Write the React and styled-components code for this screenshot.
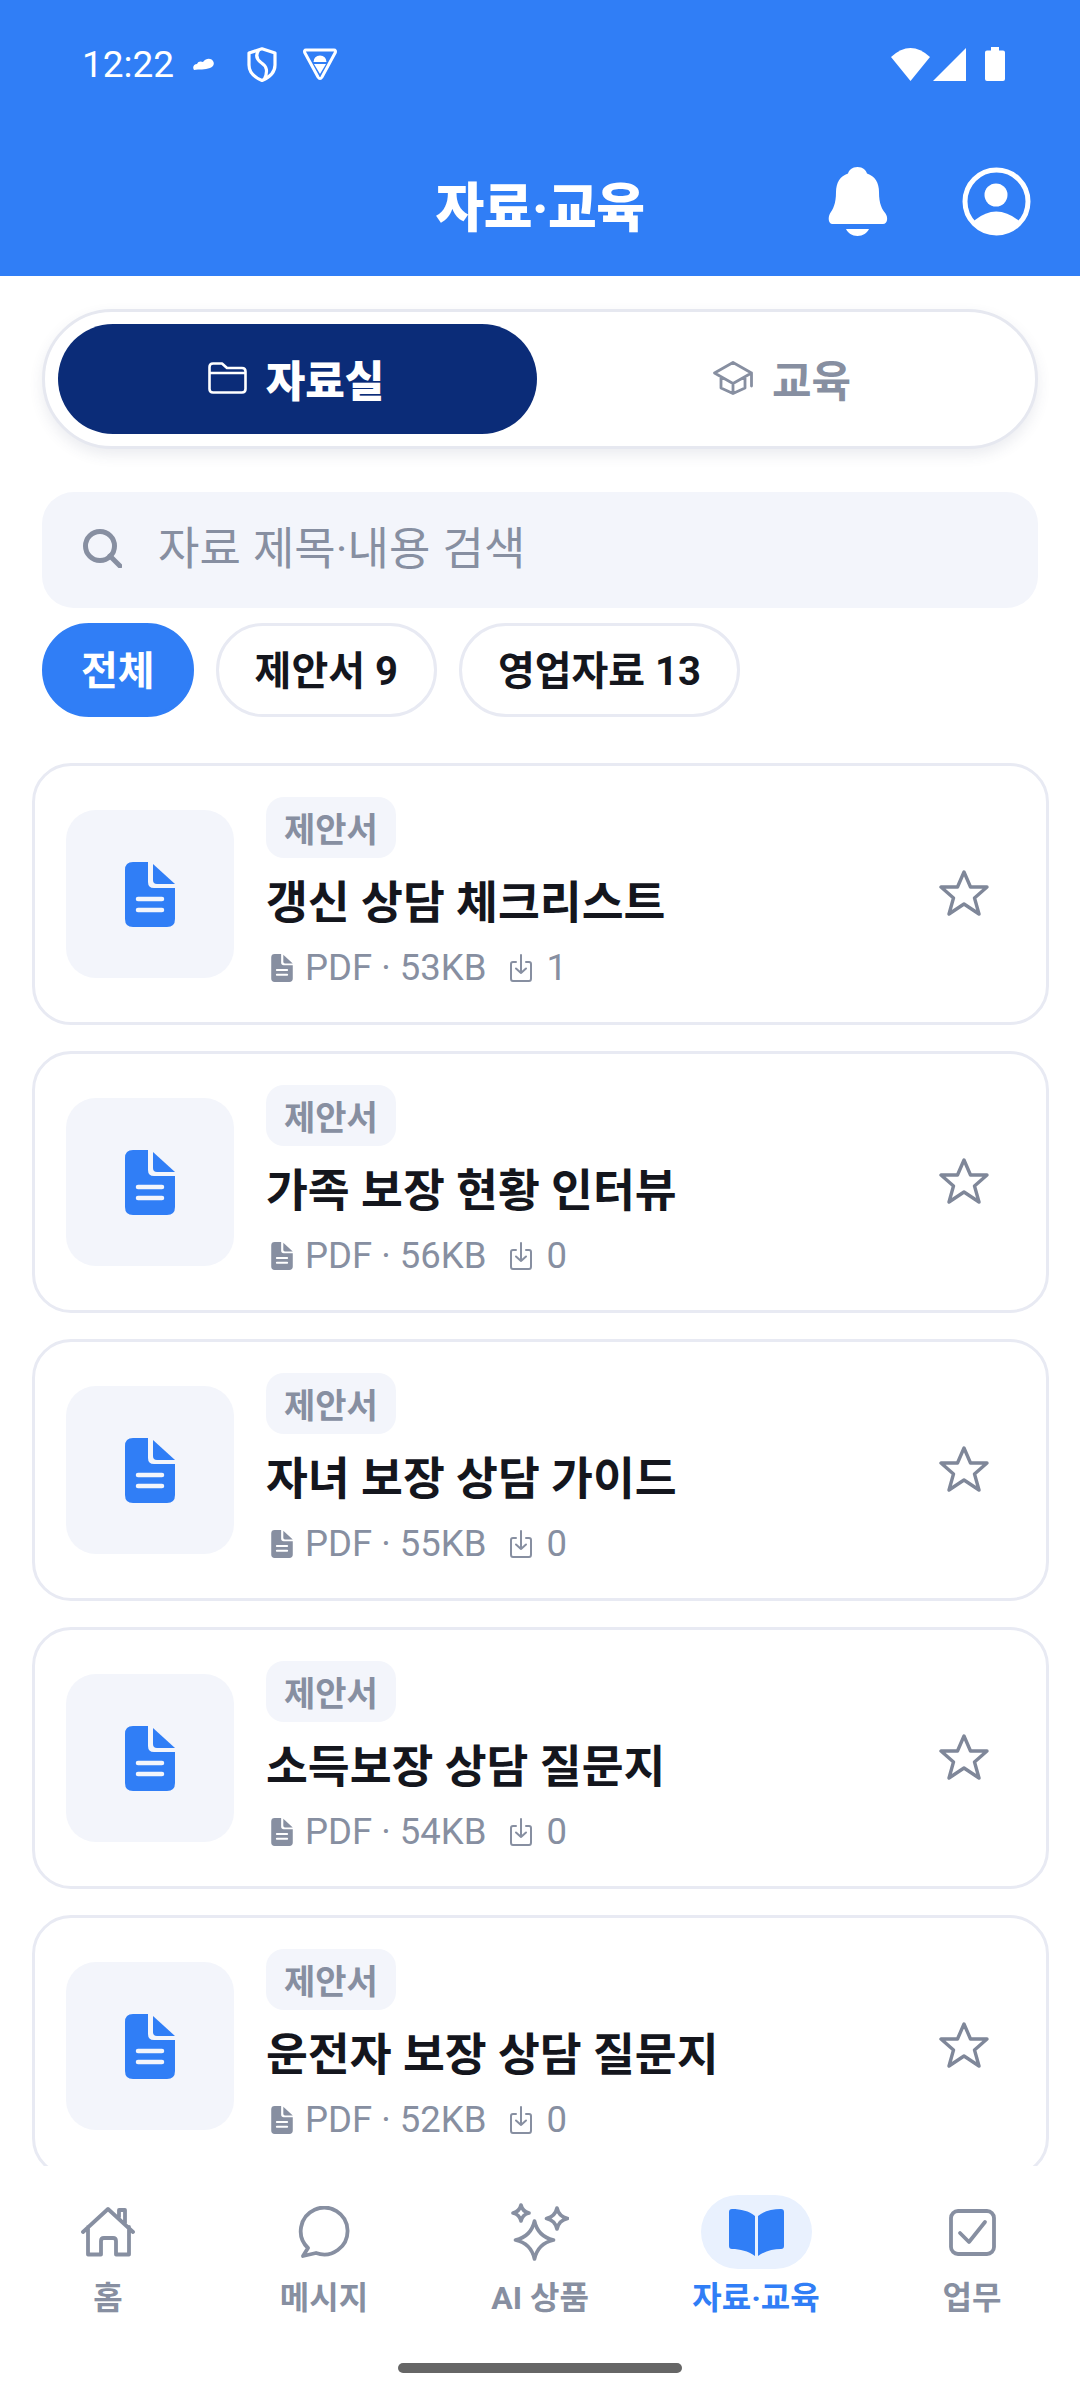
import React from "react";
import styled, { createGlobalStyle } from "styled-components";

const BLUE = "#307ef6";
const GRAY = "#878fa1";
const FONT = `Roboto, "Noto Sans CJK KR", sans-serif`;

const Global = createGlobalStyle`
  html, body { margin: 0; padding: 0; background: #fff; }
  * { box-sizing: border-box; }
  #root { width: 1080px; height: 2400px; }
`;

const Screen = styled.div`
  width: 1080px; height: 2400px; display: flex; flex-direction: column;
  background: #fff; overflow: hidden; font-family: ${FONT};
`;
const Header = styled.header`
  height: 276px; flex: none; background: ${BLUE}; color: #fff;
  display: flex; flex-direction: column;
`;
const StatusBar = styled.div`
  height: 167px; padding: 47px 75px 0 82px; display: flex; align-items: flex-start; justify-content: space-between;
`;
const StatusGroup = styled.div`
  display: flex; align-items: center; height: 34px;
`;
const Clock = styled.span`
  font-family: Roboto, sans-serif; font-size: 37px; line-height: 36px; width: 111px; padding-top: 2px;
`;
const StatusIcon = styled.svg`
  display: block; flex: none; margin-left: ${p => p.$ml || 0}px; fill: ${p => p.$line ? "none" : "#fff"};
  stroke: ${p => p.$line ? "#fff" : "none"};
`;
const TitleRow = styled.div`
  display: grid; grid-template-columns: 1fr auto 1fr; grid-template-rows: 69px; height: 69px;
`;
const Title = styled.h1`
  grid-column: 2; align-self: start; margin: 0; padding-top: 8px; font-size: 53px; font-weight: 800; line-height: 69px; letter-spacing: -0.5px;
`;
const HeaderActions = styled.div`
  grid-column: 3; display: flex; justify-content: flex-end; gap: 74px; padding-right: 49px;
`;
const Body = styled.div`
  padding: 33px 42px 0; flex: none;
`;
const TabBox = styled.div`
  height: 140px; padding: 12px 13px; border: 3px solid #e6e8f0; border-radius: 70px; background: #fff;
  box-shadow: 0 6px 14px rgba(60, 70, 110, 0.1);
  display: grid; grid-template-columns: 479px 1fr; gap: 5px;
`;
const Tab = styled.div`
  border-radius: 56px; display: flex; align-items: center; justify-content: center; gap: 19px;
  padding: 0 ${p => p.$active ? 3 : 0}px 2px 0;
  background: ${p => p.$active ? "#0b2c78" : "transparent"};
  color: ${p => p.$active ? "#fff" : GRAY};
  font-size: 43px; font-weight: ${p => p.$active ? 800 : 700};
`;
const SearchBox = styled.div`
  margin-top: 43px; height: 116px; border-radius: 32px; background: #f3f5fb; display: flex; align-items: center;
  padding: 0 0 0 41px; gap: 36px; color: ${GRAY}; font-size: 45px;
`;
const SearchGlyph = styled.span`
  display: block; height: 39px; margin-bottom: 4px; flex: none;
`;
const SearchText = styled.span`
  line-height: 60px; word-spacing: 1px;
`;
const Chips = styled.div`
  margin-top: 15px; display: flex; gap: 22px;
`;
const Chip = styled.div`
  height: 94px; border-radius: 48px; padding: 0 36px 4px; display: flex; align-items: center;
  font-size: 40px; font-weight: 700; color: ${p => p.$active ? "#fff" : "#14161d"};
  background: ${p => p.$active ? BLUE : "#fff"};
  border: 3px solid ${p => p.$active ? BLUE : "#e8eaf3"};
`;
const List = styled.div`
  flex: 1; min-height: 0; overflow: hidden; margin-top: 46px; padding: 0 31px 0 32px; display: flex; flex-direction: column; gap: 26px;
`;
const Card = styled.article`
  flex: none; height: 262px; border: 3px solid #e8eaf3; border-radius: 39px; background: #fff;
  display: flex; align-items: center; padding: 0 0 0 31px;
`;
const Thumb = styled.div`
  flex: none; width: 168px; height: 168px; border-radius: 30px; background: #f3f5fb;
  display: flex; align-items: center; justify-content: center;
`;
const Info = styled.div`
  flex: 1; min-width: 0; margin-left: 32px; align-self: flex-start; padding-top: 31px;
`;
const Badge = styled.span`
  display: inline-flex; align-items: center; height: 61px; padding: 0 18px 1px; border-radius: 18px; background: #f3f5fb;
  color: ${GRAY}; font-size: 34px; font-weight: 700;
`;
const CardTitle = styled.h2`
  margin: 15px 0 0; font-size: 45.5px; line-height: 62px; font-weight: 700; color: #14161d;
`;
const Meta = styled.div`
  display: flex; align-items: center; margin: 15px 0 0 5px; height: 36px; color: ${GRAY};
  font-family: Roboto, sans-serif; font-size: 36.5px;
`;
const MetaText = styled.span`
  margin-left: ${p => p.$ml}px; line-height: 36px;
`;
const DownloadSlot = styled.span`
  margin-left: 24px; height: 28px; display: block;
`;
const FavButton = styled.div`
  flex: none; width: 50px; height: 46px; margin-right: 57px; margin-bottom: 2px;
`;
const Nav = styled.nav`
  flex: none; height: 234px; background: #fff; display: flex; flex-direction: column; padding-top: 29px;
`;
const NavItems = styled.div`
  display: grid; grid-template-columns: repeat(5, 216px);
`;
const NavItem = styled.div`
  display: flex; flex-direction: column; align-items: center; color: ${p => p.$active ? BLUE : GRAY};
  font-size: 32px; font-weight: 700;
`;
const NavIconSlot = styled.div`
  width: 111px; height: 74px; border-radius: 37px; display: flex; align-items: center; justify-content: center;
  background: ${p => p.$active ? "#e9f1fe" : "transparent"};
`;
const NavLabel = styled.span`
  margin-top: 7px; line-height: 44px;
`;
const HomeBar = styled.div`
  width: 284px; height: 10px; border-radius: 5px; background: #666; align-self: center; margin-top: 43px;
`;

const Line = { fill: "none", stroke: "currentColor", strokeLinecap: "round", strokeLinejoin: "round" };

const DocIcon = ({ w, h, color, line }) => (
  <svg width={w} height={h} viewBox="0 0 50 65" style={{ flex: "none", display: "block" }}>
    <path fill={color} d="M8 0H23V20Q23 26 29 26H50V57Q50 65 42 65H8Q0 65 0 57V8Q0 0 8 0Z" />
    <path fill={color} d="M28 2L50 22H32Q28 22 28 18Z" />
    <path stroke={line} strokeWidth="4.5" strokeLinecap="round" d="M13 37H37M13 48H37" />
  </svg>
);
const DownloadIcon = () => (
  <svg width="22" height="28" viewBox="0 0 22 28" style={{ display: "block", color: GRAY }}>
    <path {...Line} strokeWidth="2" d="M6 8H3Q1 8 1 10V24.500Q1 27 3 27H19Q21 27 21 24.500V10Q21 8 19 8H16M11 1V19M6 14.500L11 19L16 14.500" />
  </svg>
);
const StarIcon = () => (
  <svg width="50" height="46" viewBox="0 0 50 46" style={{ color: "#7f8799", display: "block" }}>
    <path {...Line} strokeWidth="3.400" d="M25 2L31.500 17H48L35.500 28L40 44L25 34L10 44L14.500 28L2 17H18.500Z" />
  </svg>
);
const FolderIcon = () => (
  <svg width="39" height="32" viewBox="0 0 39 32" style={{ color: "#fff", flex: "none" }}>
    <path {...Line} strokeWidth="2.600" d="M1.500 27V5Q1.500 1.500 5 1.500H14L19 6H34Q37.500 6 37.500 9.500V27Q37.500 30.500 34 30.500H5Q1.500 30.500 1.500 27ZM1.500 11H37.500" />
  </svg>
);
const CapIcon = () => (
  <svg width="40" height="34" viewBox="0 0 40 34" style={{ color: GRAY, flex: "none" }}>
    <path {...Line} strokeWidth="2.800" d="M20 1.500L38.500 12L20 22.500L1.500 12ZM8 16V27L20 32.500L32 27V16M20 22.500V32.500M38.500 12V25" />
  </svg>
);
const SearchIcon = () => (
  <svg width="39" height="39" viewBox="0 0 39 39" style={{ color: GRAY, display: "block" }}>
    <path {...Line} strokeWidth="5" d="M27 27L37 37" />
    <circle cx="17" cy="17" r="14.500" {...Line} strokeWidth="5" />
  </svg>
);
const spark = (cx, cy, r) => {
  const k = r * 0.18;
  return `M${cx} ${cy - r}Q${cx + k} ${cy - k} ${cx + r} ${cy}Q${cx + k} ${cy + k} ${cx} ${cy + r}Q${cx - k} ${cy + k} ${cx - r} ${cy}Q${cx - k} ${cy - k} ${cx} ${cy - r}Z`;
};
const navIcons = {
  home: (
    <svg width="54" height="50" viewBox="0 0 54 50">
      <path {...Line} strokeWidth="3.800" d="M2 25L27 2L52 25M7 20V47.500H20V34Q20 31 23 31H32Q35 31 35 34V47.500H48V20M38 10V3H44V16" />
    </svg>
  ),
  chat: (
    <svg width="52" height="52" viewBox="0 0 52 52">
      <path {...Line} strokeWidth="3.800" d="M10 42A23.400 23.400 0 1 1 18 47L5 50Z" />
    </svg>
  ),
  ai: (
    <svg width="58" height="58" viewBox="0 0 58 58">
      <path {...Line} strokeWidth="3.600" d={spark(23.5, 37, 19)} />
      <path {...Line} strokeWidth="3.600" d={spark(10, 10, 8)} />
      <path {...Line} strokeWidth="3.600" d={spark(46, 15.500, 10.500)} />
    </svg>
  ),
  book: (
    <svg width="57" height="49" viewBox="0 0 57 49">
      <path fill={BLUE} d="M4 1C13 1 21 3 27 8V48C20 43 12 41 4 41Q1 41 1 38V4Q1 1 4 1Z" />
      <path fill={BLUE} d="M53 1C44 1 36 3 30 8V48C37 43 45 41 53 41Q56 41 56 38V4Q56 1 53 1Z" />
    </svg>
  ),
  task: (
    <svg width="47" height="47" viewBox="0 0 47 47">
      <rect x="2" y="2" width="43" height="43" rx="7" {...Line} strokeWidth="3.800" />
      <path {...Line} strokeWidth="3.800" d="M11 24L20 33L36 13" />
    </svg>
  ),
};

const files = [
  { title: "갱신 상담 체크리스트", size: "53KB", dl: 1 },
  { title: "가족 보장 현황 인터뷰", size: "56KB", dl: 0 },
  { title: "자녀 보장 상담 가이드", size: "55KB", dl: 0 },
  { title: "소득보장 상담 질문지", size: "54KB", dl: 0 },
  { title: "운전자 보장 상담 질문지", size: "52KB", dl: 0 },
];
const navs = [
  { key: "home", label: "홈" },
  { key: "chat", label: "메시지" },
  { key: "ai", label: "AI 상품" },
  { key: "book", label: "자료·교육", active: true },
  { key: "task", label: "업무" },
];

export default function App() {
  return (
    <Screen>
      <Global />
      <Header>
        <StatusBar>
          <StatusGroup>
            <Clock>12:22</Clock>
            <StatusIcon $ml="0" width="21" height="12" viewBox="0 0 21 12">
              <path d="M1 12C-1 9 1 6 4 6C5 3 8 3 10 4C13 0 18 0 20 3C22 6 20 9 17 10C12 12 6 11 1 12Z" />
            </StatusIcon>
            <StatusIcon $ml="33" $line width="30" height="35" viewBox="0 0 30 35" strokeWidth="3.200" strokeLinejoin="round">
              <path d="M15 1.800L28 6V18C28 26 21 31 15 33.500C9 31 2 26 2 18V6ZM12 2.800C8 8 9.500 12 14 15.500C20 19.500 21 24 17.500 32" />
            </StatusIcon>
            <StatusIcon $ml="26" width="34" height="32" viewBox="0 0 34 32">
              <path fill="none" stroke="#fff" strokeWidth="3" strokeLinejoin="round" d="M3 2H31Q33 2 32.300 4.500L19 29Q17 32 15 29L1.700 4.500Q1 2 3 2Z" />
              <path d="M10.500 14Q11 7.500 17 7.500Q23 7.500 23.500 14ZM11 16H23L17 26Z" />
            </StatusIcon>
          </StatusGroup>
          <StatusGroup>
            <StatusIcon width="39" height="33" viewBox="0 0 39 33"><path d="M0 9Q19.500 -9 39 9L19.500 33Z" /></StatusIcon>
            <StatusIcon $ml="3" width="33" height="33" viewBox="0 0 33 33"><path d="M0 33L33 0V33Z" /></StatusIcon>
            <StatusIcon $ml="19" width="20" height="34" viewBox="0 0 20 34">
              <path d="M6 0H14V3.500H18Q20 3.500 20 5.500V32Q20 34 18 34H2Q0 34 0 32V5.500Q0 3.500 2 3.500H6Z" />
            </StatusIcon>
          </StatusGroup>
        </StatusBar>
        <TitleRow>
          <Title>자료·교육</Title>
          <HeaderActions>
            <svg width="60" height="69" viewBox="0 0 60 69" fill="#fff">
              <path d="M29.500 0C35 0 38 3 39 6.500C47 9 51 16 51 25C51 37 54 42 57.500 46.500C60 50 60 57 55 57H4.500C0 57 0 50 2 46.500C5 42 8 37 8 25C8 16 12 9 20 6.500C21 3 24 0 29.500 0ZM18 62H41C39 66 35 69 29.500 69C24 69 20 66 18 62Z" />
            </svg>
            <svg width="69" height="69" viewBox="0 0 69 69" fill="#fff">
              <circle cx="34.500" cy="34.500" r="31.500" fill="none" stroke="#fff" strokeWidth="5" />
              <circle cx="34" cy="28" r="11.500" />
              <path d="M13 53Q34 36 56 53L58 56A32 32 0 0 1 11 56Z" />
            </svg>
          </HeaderActions>
        </TitleRow>
      </Header>
      <Body>
        <TabBox>
          <Tab $active><FolderIcon />자료실</Tab>
          <Tab><CapIcon />교육</Tab>
        </TabBox>
        <SearchBox><SearchGlyph><SearchIcon /></SearchGlyph><SearchText>자료 제목·내용 검색</SearchText></SearchBox>
        <Chips>
          <Chip $active>전체</Chip>
          <Chip>제안서 9</Chip>
          <Chip>영업자료 13</Chip>
        </Chips>
      </Body>
      <List>
        {files.map(f => (
          <Card key={f.title}>
            <Thumb><DocIcon w={50} h={65} color={BLUE} line="#f3f5fb" /></Thumb>
            <Info>
              <Badge>제안서</Badge>
              <CardTitle>{f.title}</CardTitle>
              <Meta>
                <DocIcon w={22} h={28} color={GRAY} line="#fff" />
                <MetaText $ml={12}>PDF · {f.size}</MetaText>
                <DownloadSlot><DownloadIcon /></DownloadSlot>
                <MetaText $ml={14}>{f.dl}</MetaText>
              </Meta>
            </Info>
            <FavButton><StarIcon /></FavButton>
          </Card>
        ))}
      </List>
      <Nav>
        <NavItems>
          {navs.map(n => (
            <NavItem key={n.key} $active={n.active}>
              <NavIconSlot $active={n.active}>{navIcons[n.key]}</NavIconSlot>
              <NavLabel>{n.label}</NavLabel>
            </NavItem>
          ))}
        </NavItems>
        <HomeBar />
      </Nav>
    </Screen>
  );
}
